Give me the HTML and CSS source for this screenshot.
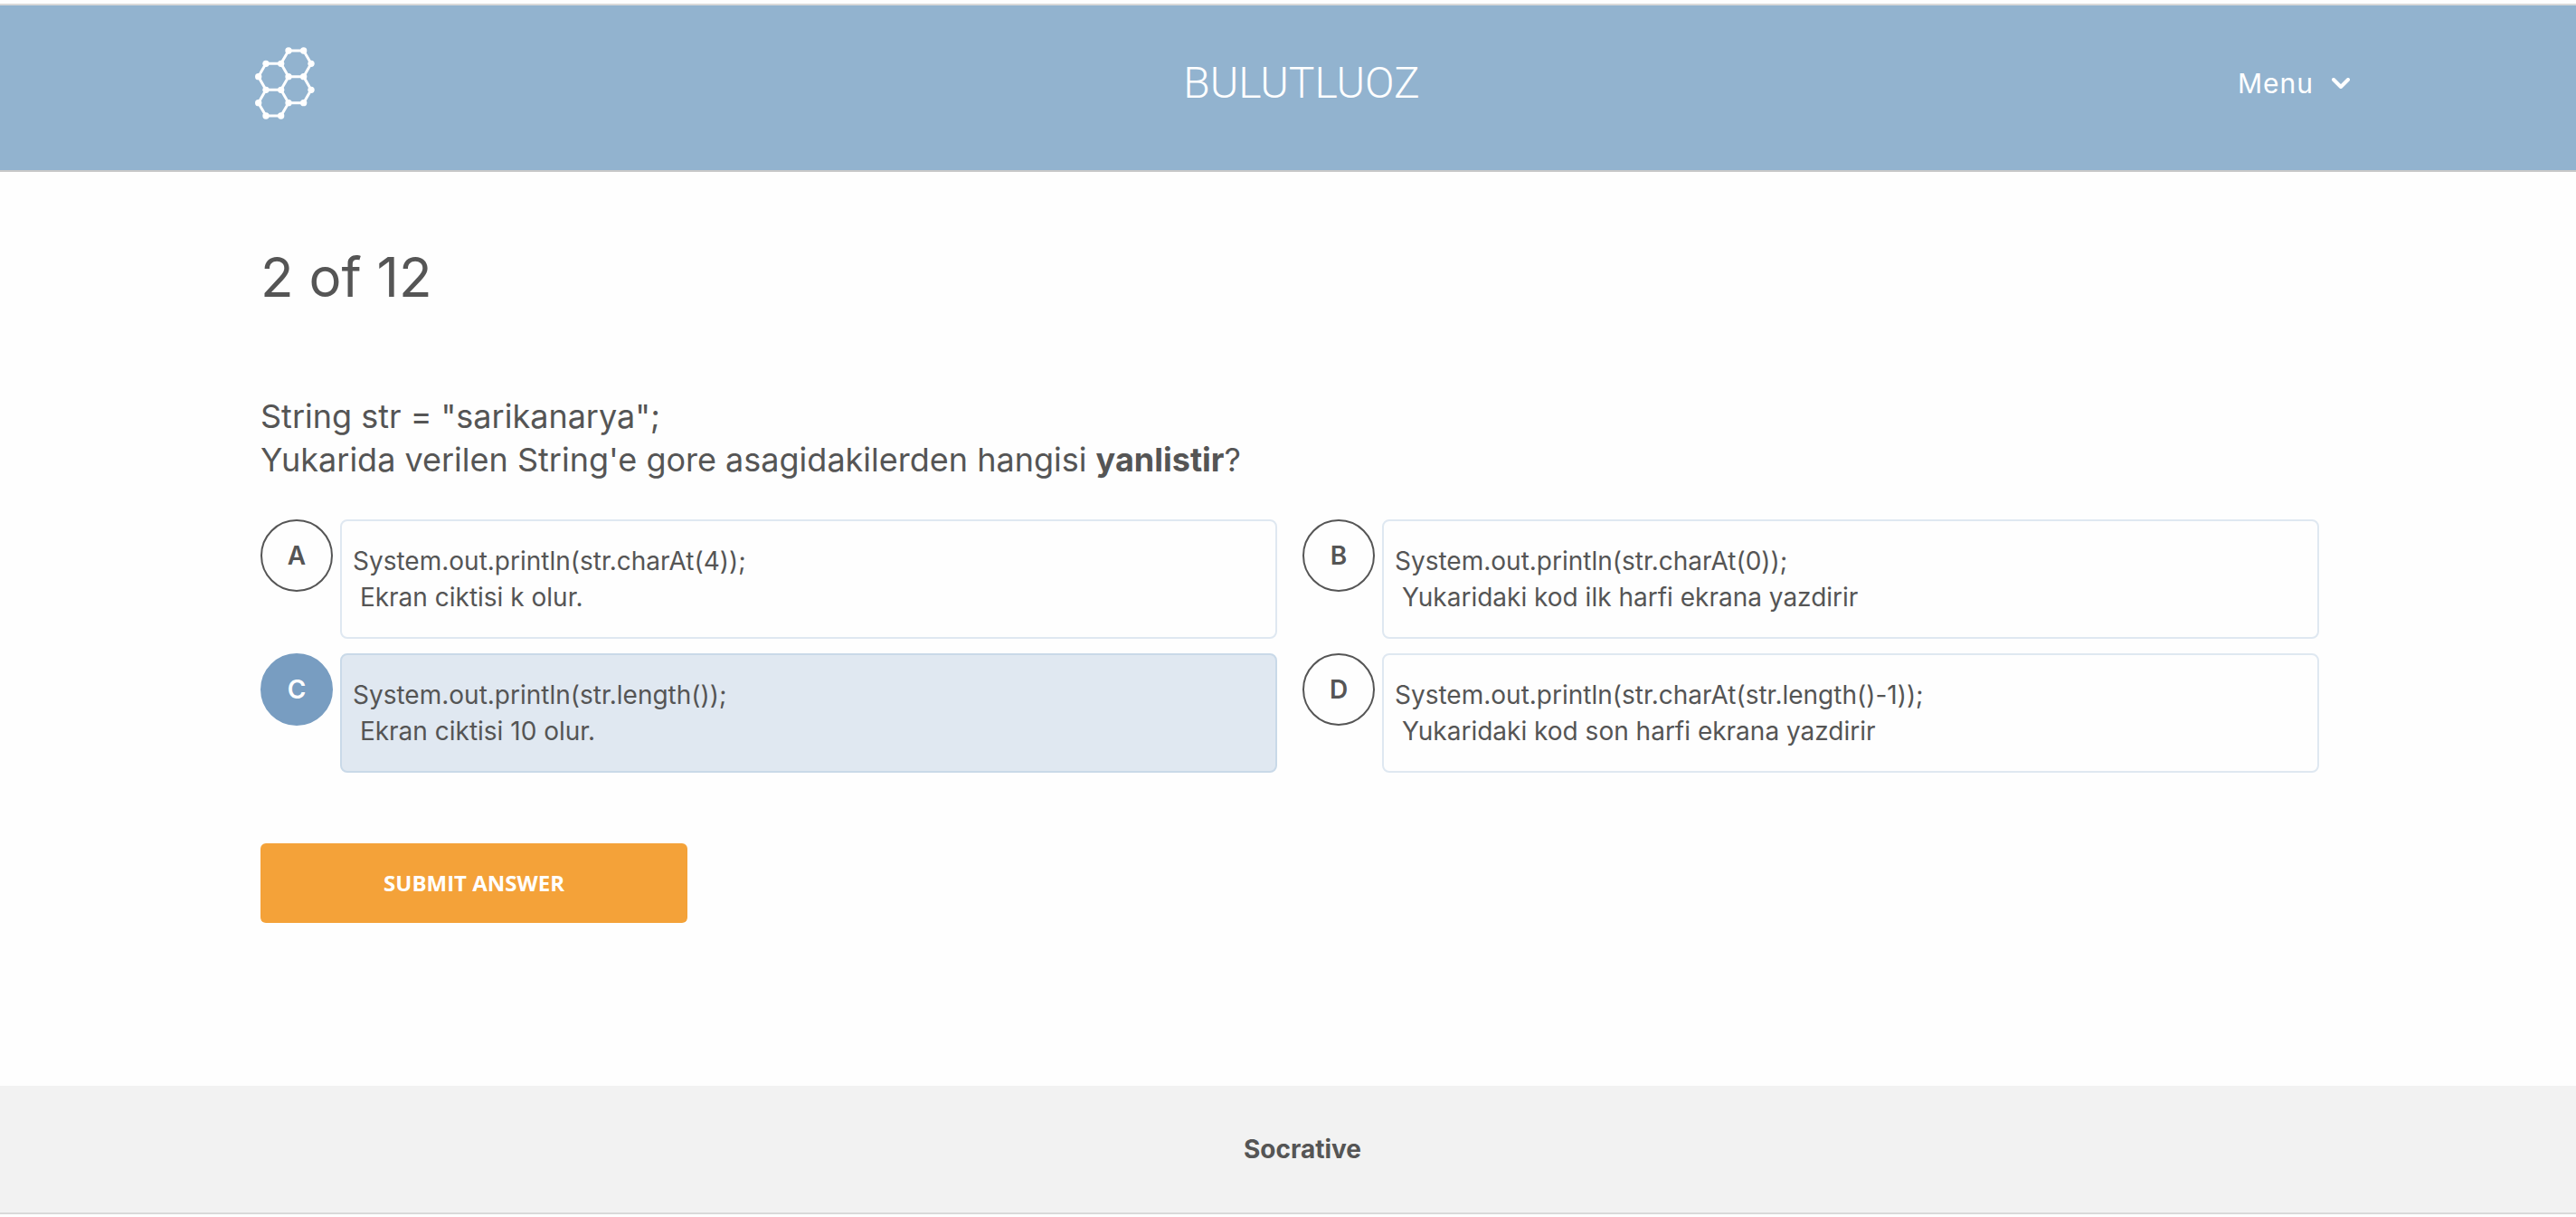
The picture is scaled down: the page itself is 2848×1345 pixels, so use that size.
FILE: index.html
```html
<!DOCTYPE html>
<html lang="tr">
<head>
<meta charset="utf-8">
<meta name="viewport" content="width=device-width, initial-scale=1">
<title>Socrative</title>
<link rel="stylesheet" href="styles.css">
</head>
<body>
<header class="header">
  <a class="logo" href="#" aria-label="Socrative">
    <svg width="70" height="84" viewBox="60 60 210 252" aria-hidden="true">
      <path class="logo-bonds" d="M177 78H227L252 121L227 164H177L152 121ZM102 121H152M102 121L77 164L102 208H152L177 164M227 164L252 208L227 251H177L152 208M102 208L77 251L102 294H152L177 251"/>
      <g class="logo-atoms">
        <circle cx="177" cy="78" r="11"/><circle cx="227" cy="78" r="11"/><circle cx="252" cy="121" r="11"/>
        <circle cx="102" cy="121" r="11"/><circle cx="152" cy="121" r="11"/><circle cx="77" cy="164" r="11"/>
        <circle cx="177" cy="164" r="11"/><circle cx="227" cy="164" r="11"/><circle cx="102" cy="208" r="11"/>
        <circle cx="152" cy="208" r="11"/><circle cx="252" cy="208" r="11"/><circle cx="77" cy="251" r="11"/>
        <circle cx="177" cy="251" r="11"/><circle cx="227" cy="251" r="11"/><circle cx="102" cy="294" r="11"/>
        <circle cx="152" cy="294" r="11"/>
      </g>
    </svg>
  </a>
  <div class="room">BULUTLUOZ</div>
  <button class="menu" type="button">Menu
    <svg width="20" height="12" viewBox="0 0 20 12" aria-hidden="true"><path d="M2 2L10 10L18 2"/></svg>
  </button>
</header>
<main class="main">
  <h1 class="progress">2 of 12</h1>
  <form>
    <fieldset class="question">
      <legend class="question-text">String str = "sarikanarya";<br>Yukarida verilen String'e gore asagidakilerden hangisi <b>yanlistir</b>?</legend>
      <div class="options">
        <label class="option"><input class="pick" type="radio" name="answer" value="A"><span class="letter">A</span><span class="answer">System.out.println(str.charAt(4));
 Ekran ciktisi k olur.</span></label>
        <label class="option"><input class="pick" type="radio" name="answer" value="B"><span class="letter">B</span><span class="answer">System.out.println(str.charAt(0));
 Yukaridaki kod ilk harfi ekrana yazdirir</span></label>
        <label class="option"><input class="pick" type="radio" name="answer" value="C" checked><span class="letter">C</span><span class="answer">System.out.println(str.length());
 Ekran ciktisi 10 olur.</span></label>
        <label class="option"><input class="pick" type="radio" name="answer" value="D"><span class="letter">D</span><span class="answer">System.out.println(str.charAt(str.length()-1));
 Yukaridaki kod son harfi ekrana yazdirir</span></label>
      </div>
    </fieldset>
    <button class="submit" type="submit">SUBMIT ANSWER</button>
  </form>
</main>
<footer class="footer">Socrative</footer>
</body>
</html>
```
FILE: styles.css
```css
* {
  box-sizing: border-box;
}

body {
  margin: 0;
  padding-top: 4px;
  background: #fefefe;
  color: #555;
  font-family: Inter, "Liberation Sans", sans-serif;
  font-size: 28px;
  line-height: 40px;
}

.header {
  display: grid;
  grid-template-columns: 1fr auto 1fr;
  align-items: start;
  height: 186px;
  padding: 44px 250px 0 280px;
  border-top: 2px solid #d9d9d9;
  border-bottom: 2px solid #c8c8c8;
  background: #92b3cf;
  color: #fff;
}

.logo {
  display: flex;
  justify-self: start;
}

.logo-bonds {
  fill: none;
  stroke: #fff;
  stroke-width: 9;
}

.logo-atoms {
  fill: #fff;
}

.room {
  padding-top: 12px;
  font-family: Roboto, "Liberation Sans", sans-serif;
  font-size: 48px;
  font-weight: 300;
  line-height: 60px;
}

.menu {
  display: flex;
  align-items: center;
  justify-self: end;
  gap: 20px;
  margin-top: 22px;
  padding: 0;
  border: 0;
  background: none;
  color: inherit;
  font: 400 30px/40px Inter, "Liberation Sans", sans-serif;
  letter-spacing: 1px;
}

.menu svg {
  fill: none;
  stroke: #fff;
  stroke-width: 4;
  stroke-linecap: round;
  stroke-linejoin: round;
}

.main {
  padding: 80px 284px 180px 288px;
}

.progress {
  margin: 0 0 94px;
  font-size: 60px;
  font-weight: 400;
  line-height: 72px;
}

.question {
  min-width: 0;
  margin: 0;
  padding: 0;
  border: 0;
}

.question-text {
  padding: 0;
  margin-bottom: 42px;
  font-size: 36px;
  line-height: 48px;
}

.options {
  display: grid;
  grid-template-columns: 1fr 1fr;
  gap: 16px 28px;
}

.option {
  display: grid;
  grid-template-columns: 80px 1fr;
  grid-template-rows: 80px 1fr;
  column-gap: 8px;
}

.pick {
  grid-area: 1 / 1;
  width: 80px;
  height: 80px;
  margin: 0;
  appearance: none;
  border: 2px solid #555;
  border-radius: 50%;
}

.letter {
  grid-area: 1 / 1;
  place-self: center;
  font-weight: 600;
}

.answer {
  grid-area: 1 / 2 / 3 / 3;
  padding: 24px 12px;
  border: 2px solid #dfe8f1;
  border-radius: 8px;
  white-space: pre-wrap;
}

.pick:checked {
  border-color: #789dc1;
  background: #789dc1;
}

.pick:checked ~ .letter {
  color: #fff;
}

.pick:checked ~ .answer {
  border-color: #c9d9e8;
  background: #e0e8f1;
}

.submit {
  display: block;
  width: 472px;
  height: 88px;
  margin-top: 78px;
  border: 0;
  border-radius: 6px;
  background: #f4a239;
  color: #fff;
  font: 700 24px/40px "Open Sans", sans-serif;
}

.footer {
  padding: 50px 0 50px 32px;
  border-bottom: 2px solid #d9d9d9;
  background: #f2f2f2;
  font-weight: 700;
  text-align: center;
}
```
